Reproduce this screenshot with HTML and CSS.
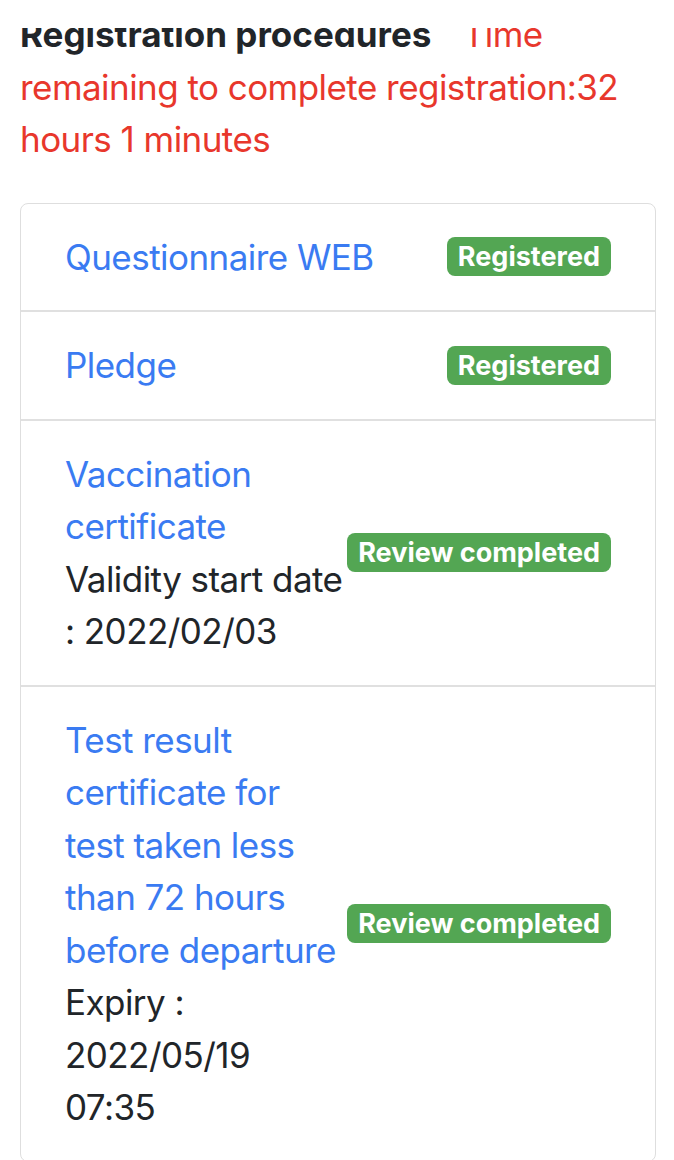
FILE: index.html
```html
<!DOCTYPE html>
<html lang="en">
<head>
  <meta charset="UTF-8" />
  <meta name="viewport" content="width=device-width, initial-scale=1" />
  <title>Registration procedures</title>
  <link rel="stylesheet" href="styles.css" />
</head>
<body>
  <!-- white strip of the app header that covers the top of the page -->
  <div class="top-cover"></div>

  <main class="page">
    <p class="procedures-head">
      <strong class="procedures-title">Registration procedures</strong>
      <span class="time-left">Time remaining to complete registration:32 hours 1 minutes</span>
    </p>

    <ul class="list-group">
      <li class="list-item">
        <div class="item-text">
          <a href="#" class="item-link">Questionnaire WEB</a>
        </div>
        <span class="badge">Registered</span>
      </li>
      <li class="list-item">
        <div class="item-text">
          <a href="#" class="item-link">Pledge</a>
        </div>
        <span class="badge">Registered</span>
      </li>
      <li class="list-item">
        <div class="item-text">
          <a href="#" class="item-link">Vaccination certificate</a><br />
          Validity start date : 2022/02/03
        </div>
        <span class="badge">Review completed</span>
      </li>
      <li class="list-item">
        <div class="item-text">
          <a href="#" class="item-link">Test result certificate for test taken less than 72 hours before departure</a><br />
          Expiry : 2022/05/19 07:35
        </div>
        <span class="badge">Review completed</span>
      </li>
    </ul>
  </main>
</body>
</html>
```

FILE: styles.css
```css
/* Global */
body {
  margin: 0;
  font-family: Inter, "Liberation Sans", sans-serif;
  font-size: 35px;
  line-height: 1.5;
  letter-spacing: -0.55px;
  color: #212529;
  background: #FFF;
}
a {
  text-decoration: none;
  color: #3A7BF2;
}

/* Header strip over the scrolled page */
.top-cover {
  position: fixed;
  top: 0;
  left: 0;
  right: 0;
  height: 28px;
  background: #FFF;
  z-index: 10;
}

.page {
  padding: 8px 18px 0 20px;
}

/* Heading + countdown */
.procedures-head {
  margin: 0 0 37px;
}
.procedures-title {
  font-weight: 700;
  letter-spacing: 0;
}
.time-left {
  color: #E8372C;
  margin-left: 22px;
}

/* List group */
.list-group {
  list-style: none;
  margin: 0;
  padding: 0;
  border: 1px solid #DEDEDE;
  border-radius: 8px;
}
.list-item {
  display: flex;
  align-items: center;
  justify-content: space-between;
  padding: 27px 44px;
}
.list-item + .list-item {
  border-top: 2px solid #E0E0E0;
}
.item-text {
  flex: 1 1 auto;
  min-width: 0;
}

/* Status badge */
.badge {
  flex: none;
  background: #53A653;
  color: #FFF;
  font-size: 27px;
  font-weight: 700;
  line-height: 1;
  letter-spacing: 0;
  padding: 6px 11px;
  border-radius: 8px;
  white-space: nowrap;
}
```
